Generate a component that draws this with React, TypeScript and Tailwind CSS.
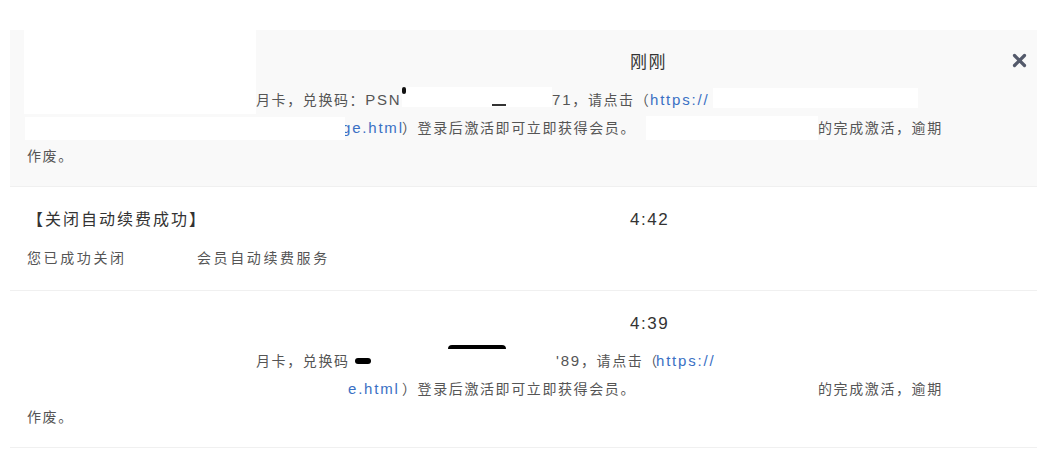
import React from "react";

const FONT = "font-['Liberation_Sans','Noto_Sans_CJK_SC',sans-serif]";
const LATIN = "text-[15px] tracking-[1.8px]";
const LINK = `shrink-0 whitespace-nowrap ${LATIN} text-[#3a70c4]`;

function Header({ title, time }: { title?: string; time: string }) {
  return (
    <div className="flex h-[30px] items-center">
      <div className="w-[603px] shrink-0 whitespace-nowrap text-[16px] tracking-[2px] text-[#333]">
        {title}
      </div>
      <div className="whitespace-nowrap text-[17px] tracking-[1.5px] text-[#333]">{time}</div>
    </div>
  );
}

function CloseIcon() {
  return (
    <svg width="15" height="15" viewBox="0 0 15 15" aria-hidden>
      <path d="M2.5 2.5 L12.5 12.5 M12.5 2.5 L2.5 12.5" stroke="#545a6b" strokeWidth="3.2" strokeLinecap="round" />
    </svg>
  );
}

export default function App() {
  return (
    <div className={`min-h-[452px] bg-white pt-[30px] pl-[10px] ${FONT}`}>
      <div className="w-[1027px]">
        {/* 第一条：未读（灰底） */}
        <div className="relative border-b border-[#f0f0f0] bg-[#f9f9f9] pt-[18px] pb-[16px] pl-[17px]">
          <div className="absolute left-[14px] top-0 h-[84px] w-[232px] bg-white" />
          <Header time="刚刚" />
          <button type="button" className="absolute right-[10px] top-[23px]">
            <CloseIcon />
          </button>
          <div className="mt-[8px] text-[14px] leading-[28px] tracking-[1.6px] text-[#555]">
            <div className="flex h-[28px] items-center">
              <span className="w-[229px] shrink-0" />
              <span className="w-[146px] shrink-0 whitespace-nowrap">
                月卡，兑换码：<span className={LATIN}>PSN</span>
              </span>
              <span className="relative h-[20px] w-[150px] shrink-0 -translate-y-[3px] bg-white">
                <span className="absolute left-0 top-0 h-[7px] w-[4px] rounded-sm bg-[#111]" />
                <span className="absolute left-[90px] top-[17px] h-[2px] w-[14px] bg-[#333]" />
              </span>
              <span className="w-[98px] shrink-0 whitespace-nowrap">
                <span className={LATIN}>71</span>，请点击（
              </span>
              <span className={`w-[63px] ${LINK}`}>https://</span>
              <span className="h-[20px] w-[205px] shrink-0 -translate-y-[2px] bg-white" />
            </div>
            <div className="flex h-[28px] items-center">
              <span className="relative z-10 -ml-[2px] h-[23px] w-[320px] shrink-0 bg-white" />
              <span className={`-ml-[3px] w-[60px] ${LINK}`}>ge.html</span>
              <span className="w-[244px] shrink-0 whitespace-nowrap">）登录后激活即可立即获得会员。</span>
              <span className="h-[24px] w-[172px] shrink-0 bg-white" />
              <span className="whitespace-nowrap">的完成激活，逾期</span>
            </div>
            <div className="flex h-[28px] items-center">
              <span className="whitespace-nowrap">作废。</span>
            </div>
          </div>
        </div>

        {/* 第二条 */}
        <div className="border-b border-[#f0f0f0] pt-[18px] pb-[18px] pl-[17px]">
          <Header title="【关闭自动续费成功】" time="4:42" />
          <div className="mt-[9px] flex h-[28px] items-center text-[14px] tracking-[2.6px] text-[#555]">
            <span className="w-[103px] shrink-0 whitespace-nowrap">您已成功关闭</span>
            <span className="w-[67px] shrink-0" />
            <span className="whitespace-nowrap">会员自动续费服务</span>
          </div>
        </div>

        {/* 第三条 */}
        <div className="relative border-b border-[#f0f0f0] pt-[18px] pb-[16px] pl-[17px]">
          <div className="absolute left-[438px] top-[54px] h-[4px] w-[58px] rounded-t-full bg-black" />
          <Header time="4:39" />
          <div className="mt-[8px] text-[14px] leading-[28px] tracking-[1.6px] text-[#555]">
            <div className="flex h-[28px] items-center">
              <span className="w-[229px] shrink-0" />
              <span className="w-[99px] shrink-0 whitespace-nowrap">月卡，兑换码</span>
              <span className="h-[6px] w-[16px] shrink-0 rounded-sm bg-black" />
              <span className="w-[185px] shrink-0" />
              <span className="w-[100px] shrink-0 whitespace-nowrap">
                <span className={LATIN}>'89</span>，请点击（
              </span>
              <span className={`w-[62px] ${LINK}`}>https://</span>
            </div>
            <div className="flex h-[28px] items-center">
              <span className="w-[321px] shrink-0" />
              <span className={`w-[54px] ${LINK}`}>e.html</span>
              <span className="w-[244px] shrink-0 whitespace-nowrap">）登录后激活即可立即获得会员。</span>
              <span className="w-[172px] shrink-0" />
              <span className="whitespace-nowrap">的完成激活，逾期</span>
            </div>
            <div className="flex h-[28px] items-center">
              <span className="whitespace-nowrap">作废。</span>
            </div>
          </div>
        </div>
      </div>
    </div>
  );
}
